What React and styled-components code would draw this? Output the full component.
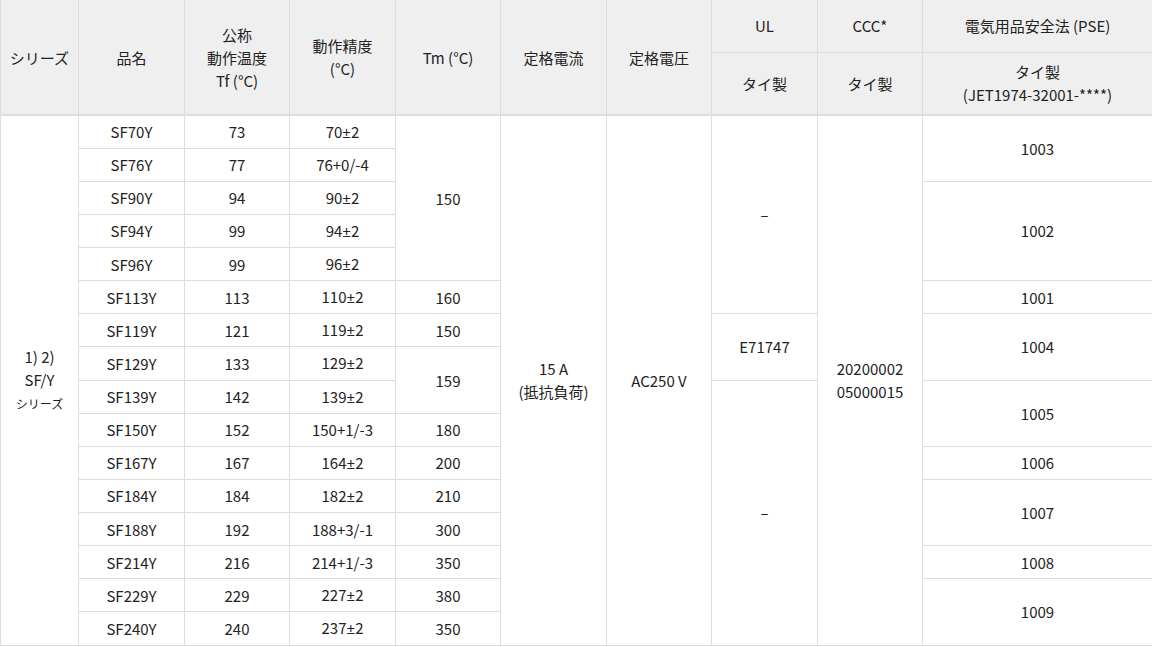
import React from "react";
import styled, { createGlobalStyle } from "styled-components";

const GlobalStyle = createGlobalStyle`
  html, body {
    margin: 0;
    padding: 0;
    background: #fff;
  }
  body {
    font-family: "Noto Sans CJK JP", "Open Sans", sans-serif;
    color: #222;
  }
`;

const rows = [
  { name: "SF70Y", tf: "73", acc: "70±2" },
  { name: "SF76Y", tf: "77", acc: "76+0/-4" },
  { name: "SF90Y", tf: "94", acc: "90±2" },
  { name: "SF94Y", tf: "99", acc: "94±2" },
  { name: "SF96Y", tf: "99", acc: "96±2" },
  { name: "SF113Y", tf: "113", acc: "110±2" },
  { name: "SF119Y", tf: "121", acc: "119±2" },
  { name: "SF129Y", tf: "133", acc: "129±2" },
  { name: "SF139Y", tf: "142", acc: "139±2" },
  { name: "SF150Y", tf: "152", acc: "150+1/-3" },
  { name: "SF167Y", tf: "167", acc: "164±2" },
  { name: "SF184Y", tf: "184", acc: "182±2" },
  { name: "SF188Y", tf: "192", acc: "188+3/-1" },
  { name: "SF214Y", tf: "216", acc: "214+1/-3" },
  { name: "SF229Y", tf: "229", acc: "227±2" },
  { name: "SF240Y", tf: "240", acc: "237±2" },
];

// cells that start at a given row index, with their rowspan
const tmCells = { 0: ["150", 5], 5: ["160", 1], 6: ["150", 1], 7: ["159", 2], 9: ["180", 1], 10: ["200", 1], 11: ["210", 1], 12: ["300", 1], 13: ["350", 1], 14: ["380", 1], 15: ["350", 1] };
const ulCells = { 0: ["–", 6], 6: ["E71747", 2], 8: ["–", 8] };
const pseCells = { 0: ["1003", 2], 2: ["1002", 3], 5: ["1001", 1], 6: ["1004", 2], 8: ["1005", 2], 10: ["1006", 1], 11: ["1007", 2], 13: ["1008", 1], 14: ["1009", 2] };

const widths = [78, 106, 105, 106, 105, 106, 105, 106, 105, 230];

// the CJK font draws ± very wide, so it gets a latin face
function Accuracy({ value }) {
  const parts = value.split("±");
  if (parts.length === 1) return value;
  return (
    <>
      {parts[0]}
      <Pm>±</Pm>
      {parts[1]}
    </>
  );
}

export default function App() {
  return (
    <>
      <GlobalStyle />
      <Table>
        <colgroup>
          {widths.map((w, i) => (
            <col key={i} style={{ width: w }} />
          ))}
        </colgroup>
        <thead>
          <HeadRow $h={52}>
            <Th rowSpan={2} $top>シリーズ</Th>
            <Th rowSpan={2} $top>品名</Th>
            <Th rowSpan={2} $top>公称<br />動作温度<br />Tf (°C)</Th>
            <Th rowSpan={2} $top>動作精度<br />(°C)</Th>
            <Th rowSpan={2} $top>Tm (°C)</Th>
            <Th rowSpan={2} $top>定格電流</Th>
            <Th rowSpan={2} $top>定格電圧</Th>
            <Th $top>UL</Th>
            <Th $top>CCC*</Th>
            <Th $top>電気用品安全法 (PSE)</Th>
          </HeadRow>
          <HeadRow $h={63}>
            <Th>タイ製</Th>
            <Th>タイ製</Th>
            <Th>タイ製<br />(JET1974-32001-****)</Th>
          </HeadRow>
        </thead>
        <tbody>
          {rows.map((r, i) => (
            <BodyRow key={r.name}>
              {i === 0 && (
                <Td rowSpan={16}>
                  1) 2)<br />SF/Y<br /><Small>シリーズ</Small>
                </Td>
              )}
              <Td>{r.name}</Td>
              <Td>{r.tf}</Td>
              <Td><Accuracy value={r.acc} /></Td>
              {tmCells[i] && <Td rowSpan={tmCells[i][1]}>{tmCells[i][0]}</Td>}
              {i === 0 && (
                <Td rowSpan={16}>15 A<br />(抵抗負荷)</Td>
              )}
              {i === 0 && <Td rowSpan={16}>AC250 V</Td>}
              {ulCells[i] && <Td rowSpan={ulCells[i][1]}>{ulCells[i][0]}</Td>}
              {i === 0 && (
                <Td rowSpan={16}>20200002<br />05000015</Td>
              )}
              {pseCells[i] && <Td rowSpan={pseCells[i][1]}>{pseCells[i][0]}</Td>}
            </BodyRow>
          ))}
        </tbody>
      </Table>
    </>
  );
}

const Table = styled.table`
  width: 1152px;
  table-layout: fixed;
  border-collapse: collapse;
  font-size: 15px;
  line-height: 23px;
  text-align: center;
  thead {
    border-bottom: 2px solid #dddddd;
  }
`;

const HeadRow = styled.tr`
  height: ${(p) => p.$h}px;
`;

const BodyRow = styled.tr`
  height: 33.13px;
`;

const Th = styled.th`
  background: #efefef;
  font-weight: normal;
  border: 1px solid #dddddd;
  border-top: ${(p) => (p.$top ? "none" : "1px solid #dddddd")};
  padding: 0 4px;
  vertical-align: middle;
`;

const Td = styled.td`
  border: 1px solid #dddddd;
  padding: 0 4px;
  vertical-align: middle;
`;

const Small = styled.span`
  font-size: 12px;
`;

const Pm = styled.span`
  font-family: "Noto Sans", sans-serif;
`;
